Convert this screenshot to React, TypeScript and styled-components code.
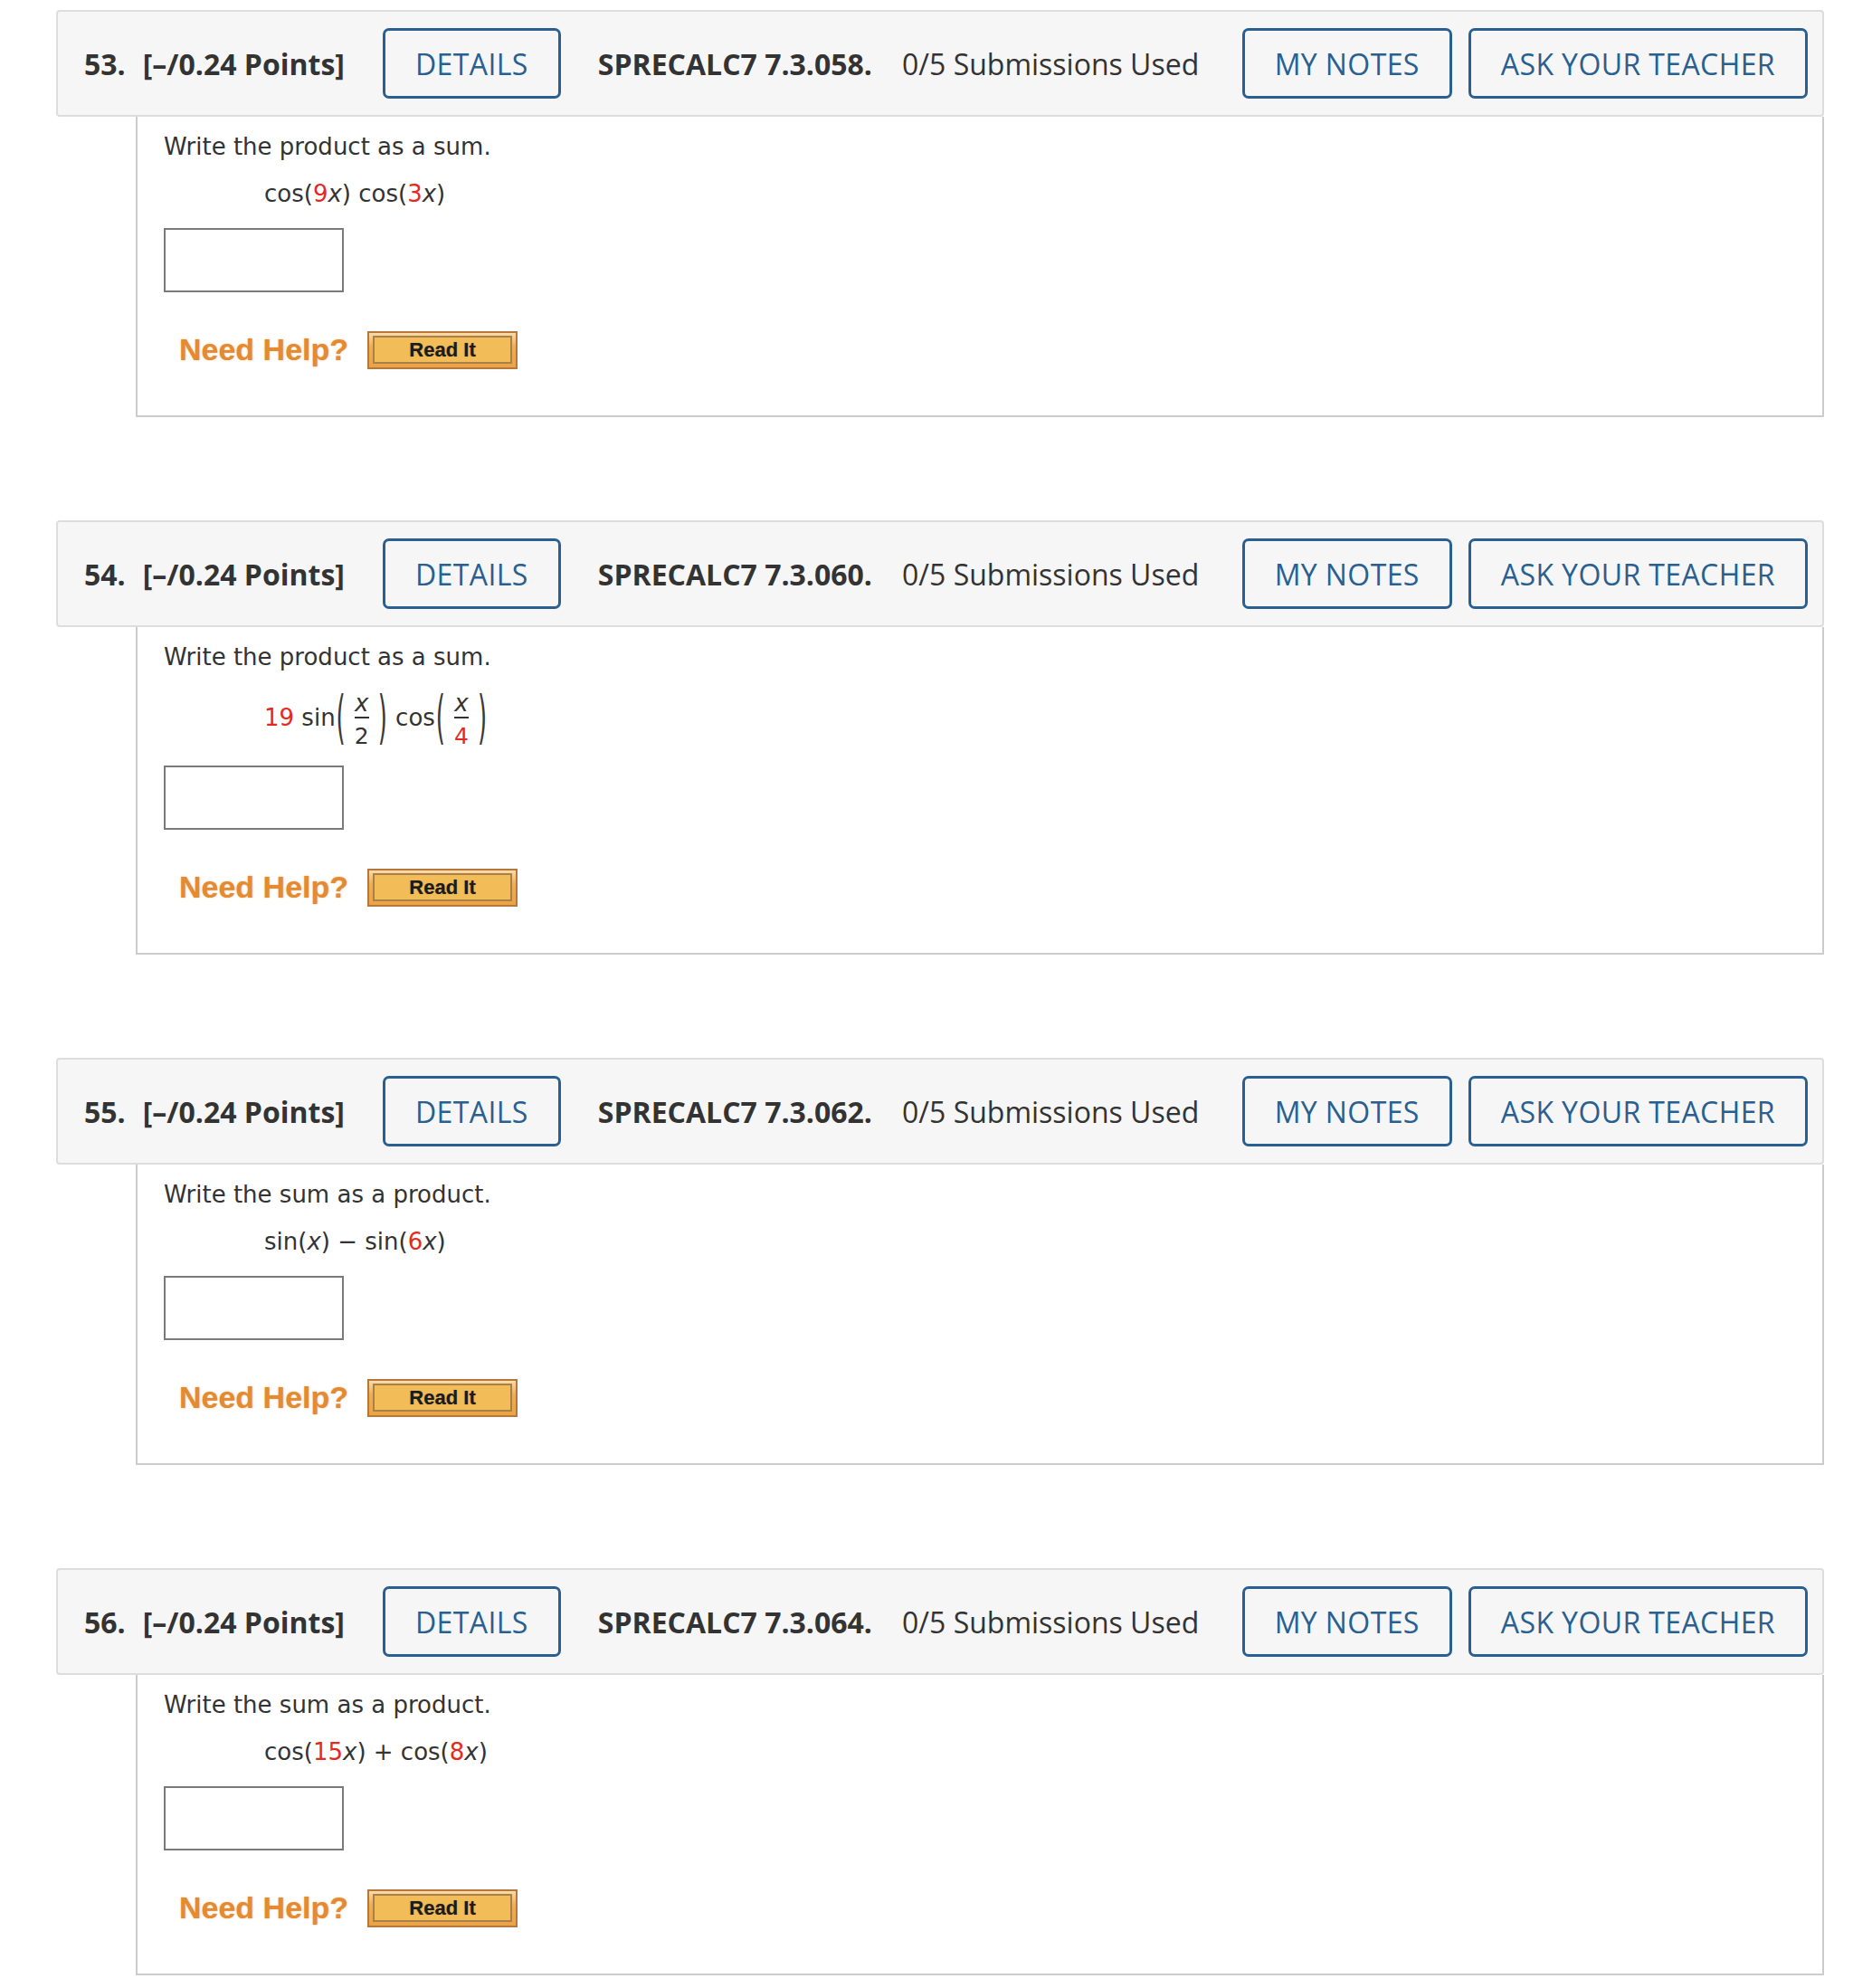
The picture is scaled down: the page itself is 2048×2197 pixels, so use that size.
import React from 'react';
import styled, { createGlobalStyle } from 'styled-components';

// Page-wide reset
const GlobalStyle = createGlobalStyle`
  body {
    margin: 0;
    background: #ffffff;
  }
`;

const Page = styled.div`
  display: flex;
  flex-direction: column;
  gap: 114px;
  padding: 11px 32px 14px 62px;
`;

const Question = styled.section`
  display: flex;
  flex-direction: column;
`;

// Grey header bar with number, points and buttons
const Header = styled.header`
  display: flex;
  align-items: center;
  box-sizing: border-box;
  height: 118px;
  padding: 0 16px 0 29px;
  background: #f6f6f6;
  border: 2px solid #dddddd;
  border-radius: 4px;
  font-family: 'Open Sans', 'Liberation Sans', sans-serif;
  font-size: 32px;
  color: #333333;
  white-space: nowrap;
`;

const Strong = styled.span<{ $gap: number }>`
  font-weight: 700;
  margin-right: ${(p) => p.$gap}px;
`;

const Plain = styled.span`
  font-weight: 400;
`;

const OutlineButton = styled.button<{ $gap?: number }>`
  box-sizing: border-box;
  height: 78px;
  padding: 0 33px;
  margin-right: ${(p) => p.$gap ?? 0}px;
  background: transparent;
  border: 3px solid #2a5f91;
  border-radius: 7px;
  color: #2a5f91;
  font-family: 'Open Sans', 'Liberation Sans', sans-serif;
  font-size: 32px;
  font-weight: 400;
  letter-spacing: 0.4px;
  cursor: pointer;
`;

const NotesGroup = styled.div`
  display: flex;
  gap: 18px;
  margin-left: auto;
`;

// White body with the question text
const Body = styled.div`
  margin-left: 88px;
  padding: 17px 29px 51px 29px;
  border: 2px solid #cccccc;
  border-top: none;
  font-family: 'DejaVu Sans', Verdana, sans-serif;
  font-size: 26px;
  line-height: 32px;
  color: #333333;
`;

const Prompt = styled.div`
  margin-bottom: 20px;
`;

const MathLine = styled.div<{ $tall?: boolean }>`
  display: flex;
  align-items: center;
  height: ${(p) => (p.$tall ? 62 : 32)}px;
  padding-left: 111px;
  margin-bottom: 22px;
  white-space: pre;
`;

const Red = styled.span`
  color: #e5291f;
`;

const Var = styled.span`
  font-style: italic;
`;

const Frac = styled.span`
  display: inline-flex;
  flex-direction: column;
  align-items: center;
  padding: 5px 9px 0;
`;

const Num = styled.span`
  font-size: 26px;
  line-height: 24px;
`;

const Den = styled.span`
  font-size: 25px;
  line-height: 24px;
`;

const Bar = styled.span`
  align-self: stretch;
  height: 2px;
  margin: 3px 0 8px;
  background: #333333;
`;

const Paren = styled.span`
  display: inline-block;
  margin: 0 1px;
  font-weight: 400;
  transform: scaleY(2.45);
  color: #3a3a3a;
`;

const AnswerBox = styled.input`
  display: block;
  box-sizing: border-box;
  width: 199px;
  height: 71px;
  margin: 0 0 43px;
  border: 2px solid #7a7a7a;
  background: #ffffff;
`;

const HelpRow = styled.div`
  display: flex;
  align-items: center;
  gap: 21px;
  margin-left: 17px;
`;

const NeedHelp = styled.span`
  font-family: 'Liberation Sans', Arial, sans-serif;
  font-size: 34px;
  font-weight: 700;
  line-height: 38px;
  margin-bottom: 3px;
  color: #e48a30;
  text-shadow: 0 0 2px rgba(228, 138, 48, 0.55);
`;

const ReadIt = styled.button`
  box-sizing: border-box;
  width: 166px;
  height: 42px;
  padding: 3px 4px 4px;
  border: 2px solid #b7773a;
  background: linear-gradient(#f8dcaa, #efae52 40%, #e9a446);
  cursor: pointer;
`;

const ReadItFace = styled.span`
  display: flex;
  align-items: center;
  justify-content: center;
  box-sizing: border-box;
  height: 100%;
  border: 2px solid #a98148;
  background: #f2bc58;
  font-family: 'Liberation Sans', Arial, sans-serif;
  font-size: 22px;
  font-weight: 700;
  color: #1c1c1c;
  text-shadow: 0 0 1px rgba(0, 0, 0, 0.4);
`;

type Item = {
  no: number;
  code: string;
  prompt: string;
  tall?: boolean;
  math: React.ReactNode;
};

const items: Item[] = [
  {
    no: 53,
    code: 'SPRECALC7 7.3.058.',
    prompt: 'Write the product as a sum.',
    math: (
      <span>
        cos(<Red>9</Red><Var>x</Var>) cos(<Red>3</Red><Var>x</Var>)
      </span>
    ),
  },
  {
    no: 54,
    code: 'SPRECALC7 7.3.060.',
    prompt: 'Write the product as a sum.',
    tall: true,
    math: (
      <>
        <Red>19</Red>
        <span> sin</span>
        <Paren>(</Paren>
        <Frac>
          <Num><Var>x</Var></Num>
          <Bar />
          <Den>2</Den>
        </Frac>
        <Paren>)</Paren>
        <span> cos</span>
        <Paren>(</Paren>
        <Frac>
          <Num><Var>x</Var></Num>
          <Bar />
          <Den><Red>4</Red></Den>
        </Frac>
        <Paren>)</Paren>
      </>
    ),
  },
  {
    no: 55,
    code: 'SPRECALC7 7.3.062.',
    prompt: 'Write the sum as a product.',
    math: (
      <span>
        sin(<Var>x</Var>) − sin(<Red>6</Red><Var>x</Var>)
      </span>
    ),
  },
  {
    no: 56,
    code: 'SPRECALC7 7.3.064.',
    prompt: 'Write the sum as a product.',
    math: (
      <span>
        cos(<Red>15</Red><Var>x</Var>) + cos(<Red>8</Red><Var>x</Var>)
      </span>
    ),
  },
];

const App: React.FC = () => {
  return (
    <>
      <GlobalStyle />
      <Page>
        {items.map((q) => (
          <Question key={q.no}>
            <Header>
              <Strong $gap={19}>{q.no}.</Strong>
              <Strong $gap={42}>[–/0.24 Points]</Strong>
              <OutlineButton $gap={41}>DETAILS</OutlineButton>
              <Strong $gap={33}>{q.code}</Strong>
              <Plain>0/5 Submissions Used</Plain>
              <NotesGroup>
                <OutlineButton>MY NOTES</OutlineButton>
                <OutlineButton>ASK YOUR TEACHER</OutlineButton>
              </NotesGroup>
            </Header>
            <Body>
              <Prompt>{q.prompt}</Prompt>
              <MathLine $tall={q.tall}>{q.math}</MathLine>
              <AnswerBox type="text" aria-label={`answer ${q.no}`} />
              <HelpRow>
                <NeedHelp>Need Help?</NeedHelp>
                <ReadIt>
                  <ReadItFace>Read It</ReadItFace>
                </ReadIt>
              </HelpRow>
            </Body>
          </Question>
        ))}
      </Page>
    </>
  );
};

export default App;
